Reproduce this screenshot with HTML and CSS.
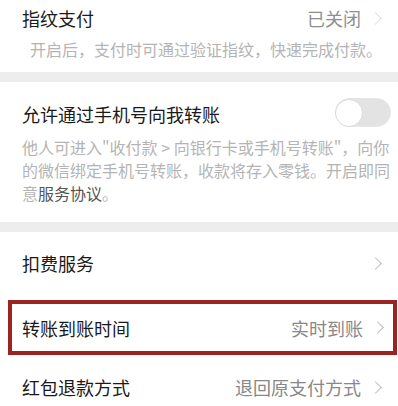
FILE: index.html
```html
<!DOCTYPE html>
<html lang="zh-CN">
<head>
    <meta charset="UTF-8">
    <meta name="viewport" content="width=device-width, initial-scale=1.0">
    <title>支付设置</title>
    <link rel="stylesheet" href="styles.css">
</head>
<body>
    <div class="section first">
        <div class="row-head">
            <div class="title">指纹支付</div>
            <div class="value faint">已关闭<span class="arrow"></span></div>
        </div>
        <div class="desc indent">开启后，支付时可通过验证指纹，快速完成付款。</div>
    </div>

    <div class="gap"></div>

    <div class="section second">
        <div class="row-head">
            <div class="title">允许通过手机号向我转账</div>
            <div class="switch"><div class="knob"></div></div>
        </div>
        <div class="desc">他人可进入"收付款 &gt; 向银行卡或手机号转账"，向你的微信绑定手机号转账，收款将存入零钱。开启即同意<span class="link">服务协议</span>。</div>
    </div>

    <div class="gap"></div>

    <div class="list">
        <div class="item">
            <div class="title">扣费服务</div>
            <div class="value"><span class="arrow"></span></div>
        </div>
        <div class="item marked">
            <div class="title">转账到账时间</div>
            <div class="value">实时到账<span class="arrow"></span></div>
        </div>
        <div class="item">
            <div class="title">红包退款方式</div>
            <div class="value">退回原支付方式<span class="arrow"></span></div>
        </div>
    </div>
</body>
</html>
```

FILE: styles.css
```css
* {
    margin: 0;
    padding: 0;
    box-sizing: border-box;
}

body {
    width: 398px;
    height: 406px;
    overflow: hidden;
    background-color: #fff;
    font-family: 'Noto Sans CJK SC', 'Noto Sans', sans-serif;
    color: #1a1a1a;
}

.section {
    padding-left: 22px;
}

.section.first {
    padding-top: 6px;
    padding-bottom: 11px;
}

.section.second {
    padding-top: 20px;
    padding-bottom: 17px;
}

.row-head {
    display: flex;
    justify-content: space-between;
    align-items: center;
    height: 24px;
    padding-right: 16px;
}

.second .row-head {
    padding-right: 7px;
}

.title {
    font-size: 18px;
    line-height: 24px;
}

.value {
    display: flex;
    align-items: center;
    font-size: 18px;
    line-height: 24px;
    color: #888;
}

.value.faint {
    color: #8e8e8e;
}

.arrow {
    display: inline-block;
    width: 9px;
    height: 9px;
    margin-left: 10px;
    margin-right: 2px;
    border-top: 1.6px solid #bdbdbd;
    border-right: 1.6px solid #bdbdbd;
    transform: rotate(45deg);
}

.faint .arrow {
    border-color: #dedede;
}

.desc {
    font-size: 16px;
    line-height: 23px;
    color: #b4b4b4;
    padding-right: 4px;
    margin-top: 9px;
}

.second .desc {
    margin-top: 10px;
}

.desc.indent {
    padding-left: 8px;
    margin-top: 8px;
}

.link {
    color: #555;
}

.switch {
    width: 56px;
    height: 29px;
    margin-top: -3px;
    border-radius: 15px;
    background-color: #e3e3e3;
    border: 1.5px solid #e6e6e6;
    display: flex;
    align-items: center;
}

.knob {
    width: 28px;
    height: 28px;
    margin-left: -1px;
    border-radius: 50%;
    background-color: #fff;
    border: 1.5px solid #dadada;
}

.gap {
    height: 10px;
    background-color: #ededed;
}

.item {
    display: flex;
    justify-content: space-between;
    align-items: center;
    height: 62px;
    padding: 0 16px 0 22px;
}

.item.marked {
    height: 55px;
    margin: 6px 1px 1px 8px;
    padding: 0 9px 0 10px;
    border: 4px solid #9b2421;
}
```
